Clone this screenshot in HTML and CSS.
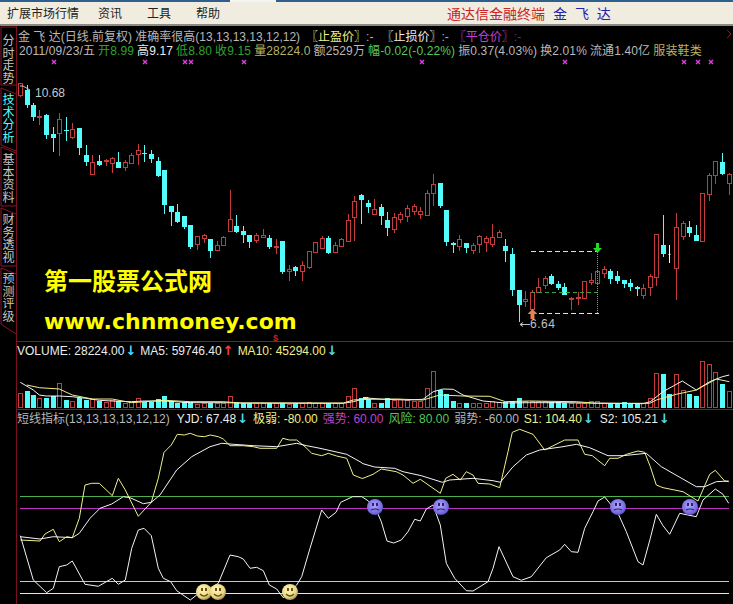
FILE: index.html
```html
<!DOCTYPE html>
<html>
<head>
  <meta charset="UTF-8">
  <title>金飞达</title>
  <link rel="stylesheet" href="styles.css">
</head>
<body>
  <div id="app">
    <div class="title-strip"><span class="title-tab"></span></div>

    <div class="menubar">
      <span class="menu-item first">扩展市场行情</span>
      <span class="menu-item">资讯</span>
      <span class="menu-item">工具</span>
      <span class="menu-item">帮助</span>
      <span class="brand">通达信金融终端</span>
      <span class="brand-name">金 飞 达</span>
    </div>

    <div class="main">
      <div class="sidebar">
        <svg class="tab-lines" width="17" height="578">
          <path d="M1 1L16 1M1 1V59H16M1 62L16 68M1 62V119L16 125M1 121L16 127M1 121V180H16M1 182L16 188M1 182V240H16M1 242L16 248M1 242V298L16 308"></path>
        </svg>
        <div class="tab tab1">分时走势</div>
        <div class="tab tab2 active">技术分析</div>
        <div class="tab tab3">基本资料</div>
        <div class="tab tab4">财务透视</div>
        <div class="tab tab5">预测评级</div>
      </div>

      <div class="panels">
        <div class="panel price-panel">
          <svg id="price-chart" class="plot"></svg>
          <div class="legend row-one">
            <span class="gray">金 飞 达(日线.前复权) 准确率很高(13,13,13,13,12,12)</span>
            <span class="yellow gap-6">〖止盈价〗</span><span class="gray">:-</span>
            <span class="white gap-8">〖止损价〗</span><span class="gray">:-</span>
            <span class="magenta gap-5">〖平仓价〗</span><span class="dim-magenta">:-</span>
          </div>
          <div class="legend row-two">
            <span class="gray">2011/09/23/五</span>
            <span class="green">开8.99</span>
            <span class="white">高9.17</span>
            <span class="green">低8.80</span>
            <span class="green">收9.15</span>
            <span class="khaki">量28224.0</span>
            <span class="gray">额2529万</span>
            <span class="bright-green">幅-0.02(-0.22%)</span>
            <span class="gray">振0.37(4.03%)</span>
            <span class="gray">换2.01%</span>
            <span class="gray">流通1.40亿</span>
            <span class="khaki">服装鞋类</span>
          </div>
          <div class="watermark wm-cn">第一股票公式网</div>
          <div class="watermark wm-url">www.chnmoney.com</div>
        </div>

        <div class="panel volume-panel">
          <svg id="volume-chart" class="plot"></svg>
          <div class="legend sub-legend">
            <span class="white">VOLUME: 28224.00</span><span class="arrow cyan">↓</span>
            <span class="white gap-4">MA5: 59746.40</span><span class="arrow red">↑</span>
            <span class="yellow gap-4">MA10: 45294.00</span><span class="arrow cyan">↓</span>
          </div>
        </div>

        <div class="panel signal-panel">
          <svg id="signal-chart" class="plot"></svg>
          <div class="legend sub-legend">
            <span class="gray">短线指标(13,13,13,13,12,12)</span>
            <span class="white gap-7">YJD: 67.48</span><span class="arrow cyan">↓</span>
            <span class="yellow gap-5">极弱: -80.00</span>
            <span class="magenta gap-5">强势: 60.00</span>
            <span class="bright-green gap-5">风险: 80.00</span>
            <span class="gray gap-5">弱势: -60.00</span>
            <span class="yellow gap-5">S1: 104.40</span><span class="arrow cyan">↓</span>
            <span class="white gap-6">S2: 105.21</span><span class="arrow cyan">↓</span>
          </div>
        </div>
      </div>
    </div>
  </div>

  <script src="chart.js"></script>
</body>
</html>
```

FILE: styles.css
```css
* {
  margin: 0;
  padding: 0;
  box-sizing: border-box;
}

body {
  background: #000;
  font-family: "Liberation Sans", "Noto Sans CJK SC", sans-serif;
  font-size: 12px;
}

#app {
  width: 733px;
  height: 604px;
  overflow: hidden;
  display: flex;
  flex-direction: column;
  background: #000;
}

.title-strip {
  height: 2px;
  background: #2f5f8c;
  display: flex;
}

.title-tab {
  width: 46px;
  margin-left: 230px;
  background: #f4f4f4;
}

.menubar {
  height: 24px;
  display: flex;
  align-items: center;
  padding-bottom: 1px;
  background: #f0ede0;
  border-bottom: 2px solid #8c8a80;
  color: #222;
}

.menu-item {
  margin-left: 25px;
  font-size: 12px;
}

.menu-item.first {
  margin-left: 7px;
  margin-right: -6px;
}

.brand {
  margin-left: 227px;
  font-size: 14px;
  color: #cc2222;
}

.brand-name {
  margin-left: 8px;
  font-size: 14px;
  word-spacing: 4px;
  color: #2222aa;
}

.main {
  flex: 1;
  display: flex;
  min-height: 0;
}

.sidebar {
  width: 17px;
  position: relative;
  border-right: 1px solid #7a1020;
}

.tab-lines {
  position: absolute;
  left: 0;
  top: 0;
}

.tab-lines path {
  fill: none;
  stroke: #8a1626;
  stroke-width: 1;
}

.tab {
  position: absolute;
  left: 2px;
  width: 13px;
  font-size: 12px;
  line-height: 12.5px;
  text-align: center;
  color: #c4c4c4;
}

.tab.active {
  color: #54fcfc;
}

.tab1 { top: 9px; }
.tab2 { top: 68px; }
.tab3 { top: 128px; }
.tab4 { top: 188px; }
.tab5 { top: 247px; }

.panels {
  flex: 1;
  display: flex;
  flex-direction: column;
  min-width: 0;
}

.panel {
  position: relative;
}

.price-panel {
  height: 316px;
  padding-top: 4px;
  border-bottom: 1px solid #8a1626;
}

.volume-panel {
  height: 68px;
  padding-top: 1px;
  border-bottom: 1px solid #8a1626;
}

.signal-panel {
  height: 194px;
  padding-top: 1px;
}

.plot {
  position: absolute;
  left: 0;
  top: 0;
  display: block;
}

.legend {
  position: relative;
  display: flex;
  align-items: center;
  height: 14px;
  white-space: nowrap;
  line-height: 14px;
}

.row-one {
  padding-left: 1px;
}

.row-two {
  padding-left: 2px;
  gap: 3px;
  letter-spacing: 0.13px;
}

.sub-legend {
  height: 16px;
}

.gap-4 { margin-left: 4px; }
.gap-5 { margin-left: 5px; }
.gap-6 { margin-left: 6px; }
.gap-7 { margin-left: 7px; }
.gap-8 { margin-left: 8px; }

.arrow {
  margin-left: 1px;
  font-size: 13px;
  font-weight: bold;
  font-family: "DejaVu Sans", sans-serif;
}

.gray { color: #b8b8b8; }
.white { color: #ececec; }
.yellow { color: #f0f08c; }
.green { color: #33a033; }
.bright-green { color: #58c858; }
.khaki { color: #b4b464; }
.magenta { color: #c040d0; }
.dim-magenta { color: #802080; }
.cyan { color: #54d8f0; }
.red { color: #e84040; }

.watermark {
  position: absolute;
  left: 27px;
  color: #ffff00;
  font-weight: bold;
  white-space: nowrap;
}

.wm-cn {
  top: 239px;
  font-size: 24px;
  line-height: 30px;
  font-family: "Noto Sans CJK SC", sans-serif;
}

.wm-url {
  top: 286px;
  font-size: 22px;
  line-height: 20px;
  font-family: "DejaVu Sans", sans-serif;
}
```

FILE: chart.js
```js
// coordinates below were read from 3x crops: x/3 + crop left, y/3 + crop top
var RED = '#c43c3c'
var CYAN = '#54fcfc'

// [x, wick top, body top, body bottom, wick bottom, colour]
var candlesLeft = [
  [61,-45,-51,-15,-8,'r'],[80,-45,-30,15,25,'c'],[100,10,15,52,62,'c'],[118,30,47,50,75,'r'],
  [139,42,45,105,117,'c'],[160,82,102,114,155,'c'],[178,38,58,100,167,'r'],[199,52,90,94,122,'c'],
  [217,70,88,110,118,'r'],[238,85,85,143,165,'c'],[257,135,165,187,197,'c'],[277,165,187,221,222,'r'],
  [298,165,183,195,198,'c'],[317,178,180,184,197,'r'],[337,170,174,188,218,'r'],[355,155,187,203,205,'c'],
  [376,180,187,201,213,'r'],[394,160,165,188,190,'r'],[415,132,150,163,195,'r'],[433,135,159,163,186,'c'],
  [454,150,162,177,190,'c'],[475,172,183,228,230,'c'],[493,210,210,315,342,'c'],[514,318,318,335,378,'c'],
  [532,312,336,366,368,'c'],[553,348,348,382,386,'c'],[571,376,376,442,446,'c'],[592,408,408,431,450,'r'],
  [613,403,405,415,428,'r'],[631,417,417,452,473,'c'],[652,422,435,450,452,'r'],[670,408,410,436,438,'r'],
  [691,270,358,392,394,'r'],[709,345,378,396,398,'c'],[730,378,393,404,430,'c'],[748,405,405,426,443,'c'],
  [769,400,405,420,428,'r'],[790,387,406,410,411,'r'],[808,404,414,442,446,'c'],[829,418,438,441,462,'r'],
  [847,424,424,516,521,'c'],[868,495,507,514,543,'r'],[886,497,501,513,528,'c'],[907,483,495,512,543,'r'],
  [928,452,452,500,508,'r'],[946,426,426,457,459,'r'],[967,408,414,443,445,'r'],[985,408,413,459,461,'c'],
  [1006,425,435,455,457,'r'],[1024,415,417,437,438,'r'],[1045,343,360,423,425,'r'],[1063,288,303,352,422,'r'],
  [1084,283,285,301,372,'c']
]

var candlesRight = [
  [16,300,309,320,340,'c'],[34,297,327,341,342,'r'],[55,313,321,347,375,'c'],[73,337,361,383,407,'c'],
  [94,340,351,387,398,'r'],[112,337,343,357,368,'r'],[133,315,325,347,365,'r'],[154,312,319,332,345,'r'],
  [172,322,333,342,356,'r'],[193,270,279,344,345,'r'],[211,222,253,278,318,'r'],[232,250,250,318,323,'c'],
  [250,331,331,426,437,'c'],[271,427,430,436,458,'c'],[289,405,418,437,453,'r'],[310,430,430,444,458,'c'],
  [331,430,436,449,461,'r'],[349,405,409,433,458,'r'],[370,408,415,425,456,'r'],[388,373,412,431,440,'r'],
  [409,390,397,412,414,'r'],[427,418,439,452,486,'c'],[448,445,462,570,587,'c'],[469,570,570,614,665,'c'],
  [487,572,596,604,620,'r'],[508,570,577,627,655,'r'],[526,535,562,577,579,'r'],[547,528,535,555,567,'r'],
  [565,522,528,553,556,'c'],[586,542,553,565,569,'c'],[604,550,562,584,586,'c'],[625,592,595,598,630,'r'],
  [646,577,591,594,615,'r'],[664,543,544,593,595,'r'],[685,520,541,546,555,'r'],[703,512,514,549,551,'r'],
  [724,498,508,520,533,'r'],[742,507,514,537,551,'c'],[763,514,528,543,551,'c'],[784,540,541,553,563,'c'],
  [802,537,550,561,572,'c'],[823,557,562,566,587,'c'],[841,553,565,584,597,'r'],[862,522,529,562,588,'r'],
  [880,403,403,530,557,'r'],[901,346,436,462,470,'c'],[919,435,462,464,488,'w'],[940,340,382,503,600,'r'],
  [961,363,370,407,420,'r'],[979,363,381,399,411,'c'],[1000,376,405,422,424,'c'],[1018,280,280,423,425,'r'],
  [1039,218,225,281,302,'r'],[1057,183,183,226,252,'r'],[1078,158,186,222,225,'c'],[1099,220,222,250,285,'r']
]

// [x, bar top, colour]
var volumeLeft = [
  [61,175,'r'],[80,168,'c'],[100,180,'c'],[118,190,'r'],[139,188,'c'],[160,182,'c'],[178,145,'r'],[199,195,'c'],
  [217,199,'r'],[238,188,'c'],[257,195,'c'],[277,192,'r'],[298,198,'c'],[317,202,'r'],[337,195,'r'],[355,198,'c'],
  [376,203,'r'],[394,200,'r'],[415,190,'r'],[433,200,'c'],[454,200,'c'],[475,193,'c'],[493,184,'c'],[514,197,'c'],
  [532,204,'c'],[553,200,'c'],[571,200,'c'],[592,207,'r'],[613,205,'r'],[631,205,'c'],[652,205,'r'],[670,203,'r'],
  [691,184,'r'],[709,200,'c'],[730,204,'c'],[748,204,'c'],[769,204,'r'],[790,205,'r'],[808,204,'c'],[829,205,'r'],
  [847,204,'c'],[868,206,'r'],[886,204,'c'],[907,203,'r'],[928,200,'r'],[946,203,'r'],[967,203,'r'],[985,204,'c'],
  [1006,205,'r'],[1024,205,'r'],[1045,184,'r'],[1063,160,'r'],[1084,190,'c']
]

var volumeRight = [
  [16,193,'c'],[34,205,'r'],[55,204,'c'],[73,190,'c'],[94,196,'r'],[112,192,'r'],[133,195,'r'],[154,198,'r'],
  [172,198,'r'],[193,160,'r'],[211,108,'r'],[232,165,'c'],[250,178,'c'],[271,198,'c'],[289,205,'r'],[310,204,'c'],
  [331,204,'r'],[349,204,'r'],[370,204,'r'],[388,198,'r'],[409,200,'r'],[427,200,'c'],[448,198,'c'],[469,190,'c'],
  [487,198,'r'],[508,198,'r'],[526,198,'r'],[547,198,'r'],[565,200,'c'],[586,200,'c'],[604,204,'c'],[625,203,'r'],
  [646,204,'r'],[664,203,'r'],[685,198,'r'],[703,198,'r'],[724,204,'r'],[742,203,'c'],[763,203,'c'],[784,202,'c'],
  [802,205,'c'],[823,205,'c'],[841,205,'r'],[862,190,'r'],[880,115,'r'],[901,118,'c'],[919,178,'c'],[940,118,'r'],
  [961,166,'r'],[979,176,'c'],[1000,183,'c'],[1018,78,'r'],[1039,88,'r'],[1057,112,'r'],[1078,147,'c'],[1099,168,'r']
]

// lines, split at the two crops: [left points], [right points]
var ma5 = [
  [61,142,100,165,118,180,139,183,178,183,217,185,257,190,298,196,337,198,394,200,433,198,493,198,571,203,670,203,730,204,1030,205,1060,200,1105,188],
  [0,188,60,193,133,195,180,193,211,170,240,162,271,163,300,180,360,198,427,204,500,203,600,203,840,206,862,200,900,170,958,138,1000,165,1040,140,1078,125,1099,120]
]
var ma10 = [
  [80,150,118,158,178,162,217,180,277,192,337,192,394,203,493,196,571,200,670,200,720,204,1030,204,1060,195,1105,192],
  [0,193,100,192,180,195,230,180,300,183,380,184,427,200,500,198,640,200,700,205,860,205,880,195,940,178,1000,165,1060,132,1099,140]
]
var yjd = [
  [61,345,120,348,135,327,160,313,178,350,200,335,217,338,238,280,255,180,275,175,298,175,337,212,355,160,376,195,415,274,454,232,475,160,492,82,514,60,532,28,553,30,571,25,592,33,613,35,631,30,655,35,670,42,690,62,730,62,760,65,780,70,830,70,848,40,868,45,890,45,915,65,935,85,965,92,985,85,1010,93,1040,100,1060,150,1085,160],
  [0,160,30,148,55,132,100,140,120,150,150,175,172,163,232,205,248,160,270,148,292,165,310,140,330,150,345,175,380,177,410,188,435,80,448,22,470,13,510,28,545,75,605,45,645,45,665,88,688,92,725,122,740,100,765,100,790,88,825,78,845,82,862,125,880,180,900,188,960,200,1005,228,1040,148,1057,136,1085,168,1097,170]
]
var slow = [
  [61,335,120,342,160,335,217,338,238,325,270,280,300,250,335,237,370,215,390,218,430,236,454,232,480,210,530,135,575,95,630,65,665,55,700,58,760,62,830,65,890,55,920,62,960,70,1040,88,1080,110],
  [0,116,35,126,95,130,120,140,175,152,238,172,260,165,330,160,390,167,412,172,450,125,490,90,530,75,600,65,640,58,680,68,735,92,780,92,850,85,895,125,1000,185,1025,185,1060,170,1097,168]
]
var fast = [
  [61,332,100,465,140,503,160,490,178,425,200,420,217,408,255,478,295,484,337,460,355,478,376,465,395,370,415,315,432,310,454,332,475,430,490,460,512,470,530,497,571,525,590,510,613,500,655,475,690,390,715,395,730,402,750,430,770,427,790,437,808,480,830,492,850,518,890,480,905,455,930,370,965,255,985,280,1008,262,1022,232,1058,215,1085,215],
  [12,225,35,245,55,290,72,348,92,354,115,345,135,320,155,283,172,288,190,252,210,240,232,300,250,415,275,460,310,497,330,498,375,470,390,430,408,365,450,455,475,466,505,455,550,398,590,375,605,358,625,380,645,382,665,310,690,260,705,228,725,216,765,265,790,320,825,410,840,420,862,340,880,268,900,302,920,328,950,265,1000,275,1020,225,1057,192,1080,208,1097,235]
]

var RIGHT = 363

function candleSvg(list, left, top) {
  var out = ''
  list.forEach(c => {
    var x = Math.round(left + c[0] / 3)
    var y = v => Math.round(top + v / 3)
    var colour = c[5] == 'r' ? RED : c[5] == 'w' ? '#fff' : CYAN
    var bodyTop = y(c[2])
    var height = Math.max(y(c[3]) - bodyTop, 1)
    out += `<rect x="${x}" y="${y(c[1])}" width="1" height="${y(c[4]) - y(c[1])}" fill="${colour}"/>`
    if (c[5] == 'r') {
      out += `<rect x="${x - 2}" y="${bodyTop}" width="5" height="${height}" fill="#000"/>`
      out += `<rect x="${x - 1.5}" y="${bodyTop + 0.5}" width="4" height="${height}" fill="#000" stroke="${colour}"/>`
    } else {
      var wide = c[5] == 'w' ? 2 : 5
      out += `<rect x="${x - (wide - 1) / 2}" y="${bodyTop}" width="${wide}" height="${height}" fill="${colour}"/>`
    }
  })
  return out
}

function barSvg(list, left) {
  var out = ''
  list.forEach(b => {
    var x = Math.round(left + b[0] / 3)
    var top = Math.round(335 + b[1] / 3)
    if (b[2] == 'r') {
      out += `<rect x="${x - 1.5}" y="${top + 0.5}" width="4" height="${407 - top}" fill="#000" stroke="${RED}"/>`
    } else {
      out += `<rect x="${x - 2}" y="${top}" width="5" height="${408 - top}" fill="${CYAN}"/>`
    }
  })
  return out
}

function lineSvg(parts, top, colour) {
  var points = []
  parts.forEach((part, i) => {
    for (var n = 0; n < part.length; n += 2) {
      points.push((i * RIGHT + part[n] / 3).toFixed(1) + ',' + (top + part[n + 1] / 3).toFixed(1))
    }
  })
  return `<polyline points="${points.join(' ')}" fill="none" stroke="${colour}" stroke-width="1"/>`
}

function hline(y, colour) {
  return `<rect x="20" y="${y}" width="709" height="1" fill="${colour}"/>`
}

function marker(x) {
  return `<path d="M${x - 2} 60l4 4m0 -4l-4 4" stroke="#e040e0" stroke-width="1.4"/>`
}

function face(x, y, happy) {
  var fill = happy ? 'url(#smile)' : 'url(#frown)'
  var ink = happy ? '#6a5010' : '#2a2470'
  var mouth = happy
    ? `M${x - 4} ${y + 2}Q${x} ${y + 6} ${x + 4} ${y + 2}`
    : `M${x - 4} ${y + 3}Q${x} ${y + 1} ${x + 4} ${y + 3}`
  return `<circle cx="${x}" cy="${y}" r="8" fill="${fill}"/>` +
    `<rect x="${x - 3}" y="${y - 4}" width="2" height="3" fill="${ink}"/>` +
    `<rect x="${x + 1}" y="${y - 4}" width="2" height="3" fill="${ink}"/>` +
    `<path d="${mouth}" fill="none" stroke="${ink}" stroke-width="1.2"/>`
}

function setChart(id, top, height, html) {
  var svg = document.getElementById(id)
  svg.setAttribute('width', 716)
  svg.setAttribute('height', height)
  svg.setAttribute('viewBox', `17 ${top} 716 ${height}`)
  svg.innerHTML = html
}

var price = ''
;[54, 145, 185, 191, 244, 422, 565, 684, 698, 711].forEach(x => { price += marker(x) })
price += candleSvg(candlesLeft, 0, 100) + candleSvg(candlesRight, RIGHT, 100)
price += '<path d="M20 86h3l7 4" fill="none" stroke="#c8c8c8"/>'
price += '<text x="35" y="97" fill="#c8c8c8" font-family="Liberation Sans" font-size="12">10.68</text>'
price += '<path d="M531 251.5h66M531 313.5h68" stroke="#e8e8a0" stroke-dasharray="5 3"/>'
price += '<path d="M531 292.5h66" stroke="#3aa03a" stroke-dasharray="4 3"/>'
price += '<path d="M597.5 252V313" stroke="#44cc44" stroke-dasharray="1 1"/>'
price += '<path d="M596 243h3v5h3l-4.500 5l-4.500 -5h3z" fill="#22dd22"/>'
price += '<path d="M532.500 309l5 5h-3v5h-4v-5h-3z" fill="#e88050"/>'
price += '<path d="M520 324.500h10M520 324.500l3 -2M520 324.500l3 2" fill="none" stroke="#c0c0c0"/>'
price += '<text x="530" y="328" fill="#c0c0c0" font-family="Liberation Sans" font-size="12" letter-spacing="0.5">6.64</text>'
price += '<text x="273" y="341" fill="#d02020" font-family="Liberation Sans" font-size="9" font-weight="bold">$</text>'
price += '<path d="M727 30l4 4l-4 4" fill="none" stroke="#8a1626"/>'
setChart('price-chart', 26, 316, price)

var volume = barSvg(volumeLeft, 0) + barSvg(volumeRight, RIGHT)
volume += lineSvg(ma5, 335, '#f4f4f4') + lineSvg(ma10, 335, '#f0f08c')
setChart('volume-chart', 342, 68, volume)

var signal = `<defs>
  <radialGradient id="smile" cx="0.4" cy="0.35" r="0.7"><stop offset="0" stop-color="#fff8c0"/><stop offset="0.7" stop-color="#e8d480"/><stop offset="1" stop-color="#8a7a40"/></radialGradient>
  <radialGradient id="frown" cx="0.45" cy="0.4" r="0.7"><stop offset="0" stop-color="#b0a8f8"/><stop offset="0.7" stop-color="#7468e0"/><stop offset="1" stop-color="#3c3098"/></radialGradient>
</defs>`
signal += hline(496, '#4cb04c') + hline(508, '#c030c0') + hline(581, '#c8c8c8') + hline(593, '#f0f08c')
signal += lineSvg(yjd, 425, '#f0f08c') + lineSvg(slow, 425, '#f4f4f4') + lineSvg(fast, 425, '#f4f4f4')
;[204, 218, 290].forEach(x => { signal += face(x, 592, true) })
;[375, 441, 618, 690].forEach(x => { signal += face(x, 507, false) })
setChart('signal-chart', 410, 194, signal)
```
